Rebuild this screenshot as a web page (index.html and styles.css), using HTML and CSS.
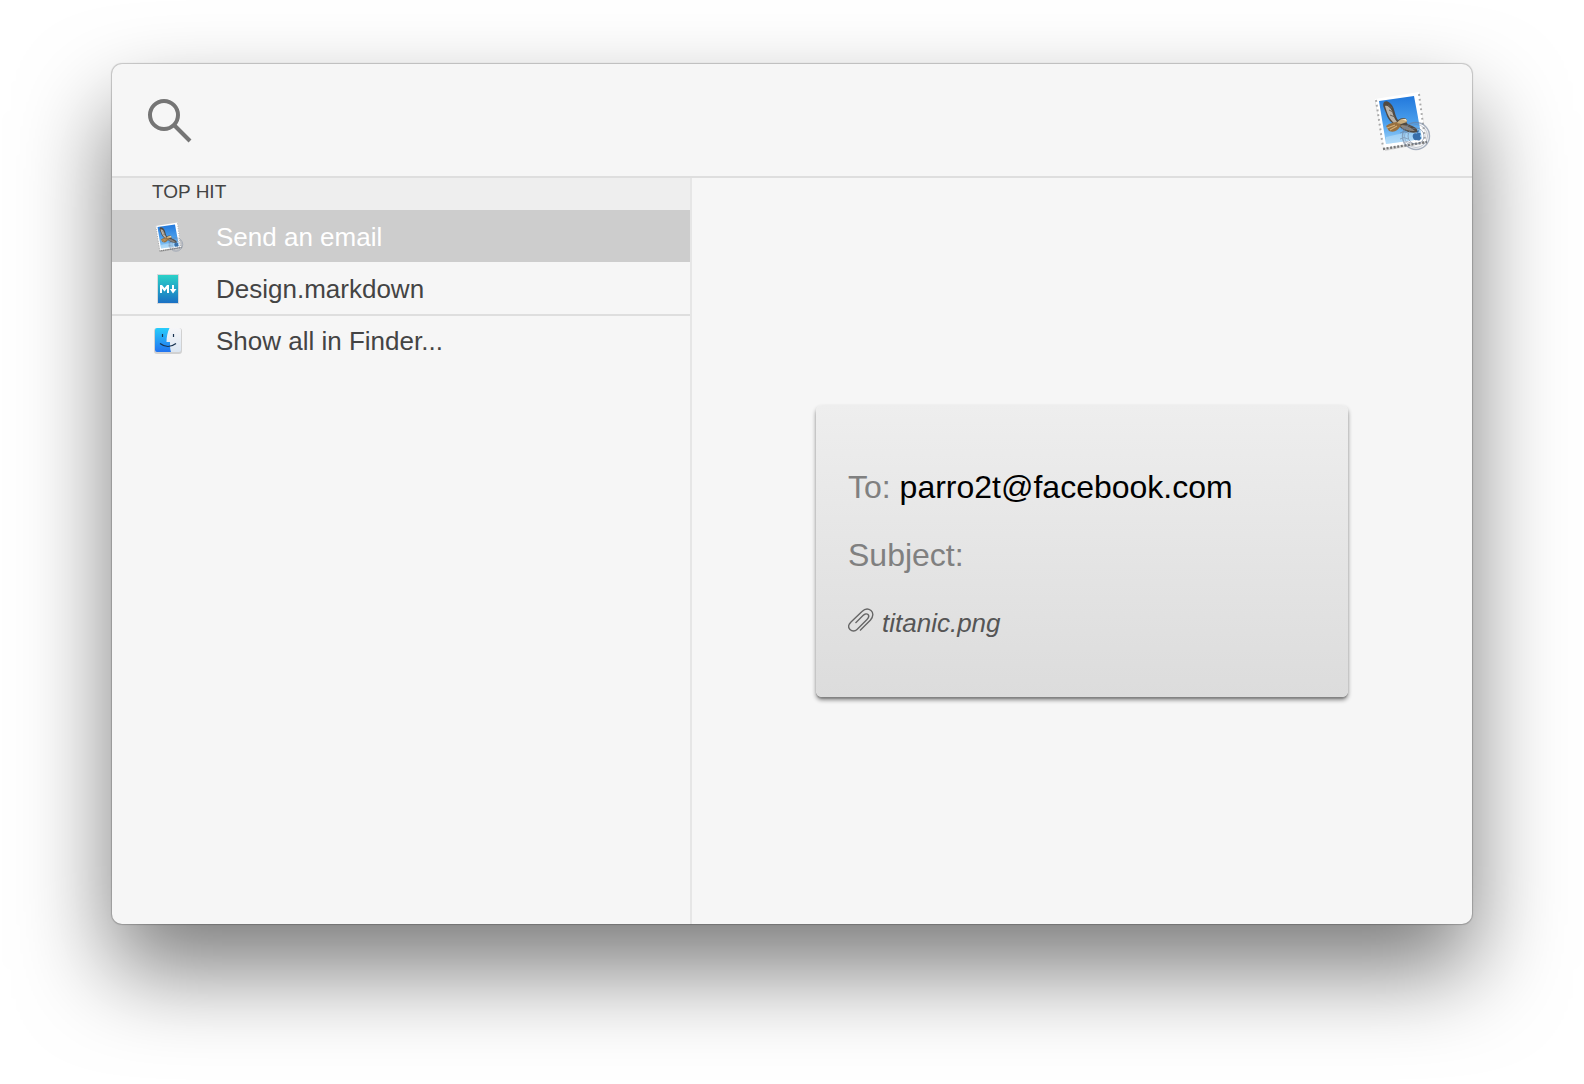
FILE: index.html
```html
<!DOCTYPE html>
<html lang="en">
<head>
<meta charset="utf-8">
<title>Search</title>
<link rel="stylesheet" href="styles.css">
</head>
<body>
<svg class="defs" aria-hidden="true">
  <defs>
    <linearGradient id="sky" x1="0" y1="0" x2="0" y2="1">
      <stop offset="0" stop-color="#2178dc"/><stop offset="0.55" stop-color="#4b9fec"/><stop offset="1" stop-color="#9dd2f8"/>
    </linearGradient>
    <linearGradient id="doc" x1="0" y1="0" x2="0" y2="1">
      <stop offset="0" stop-color="#2bd2c8"/><stop offset="1" stop-color="#1a70c4"/>
    </linearGradient>
    <linearGradient id="face" x1="0" y1="0" x2="0" y2="1">
      <stop offset="0" stop-color="#27cdfb"/><stop offset="1" stop-color="#2273f0"/>
    </linearGradient>
    <linearGradient id="pale" x1="0" y1="0" x2="0" y2="1">
      <stop offset="0" stop-color="#f6f6f8"/><stop offset="1" stop-color="#dbe6f2"/>
    </linearGradient>
    <symbol id="stamp" viewBox="0 0 60 64">
      <path d="M3 13 47 5 55 54 13 62Z" fill="#000" opacity=".12"/>
      <path d="M3 10 47 3 54 52 12 59Z" fill="#fff"/>
      <path d="M4 11 11 58M47 5 53 50" stroke="#a9a9a9" stroke-width="2" stroke-dasharray="1.8 3" fill="none"/>
      <path d="M11 60 55 53" stroke="#777" stroke-width="2.4" stroke-dasharray="2 1.6" fill="none"/>
      <path d="M7 12 42 7 50 50 14 55Z" fill="url(#sky)"/>
      <path d="M14 48 49 40 50 50 14 55Z" fill="#d6edfb" opacity=".4"/>
      <path d="M24 36C19 34 15 29 14 24 12 19 10 16 12 13 15 11 19 14 21 18 23 22 23 27 26 31 29 29 33 28 35 31 35 33 33 34 38 36 43 38 45 39 46 43 39 45 32 42 28 38Z" fill="#514a42"/>
      <path d="M13 17C15 16 18 18 20 22 21 26 22 29 25 33L23 35C17 30 15 24 13 17Z" fill="#b9b2a8"/>
      <path d="M30 36C35 36 39 39 43 42 37 42 32 41 28 37Z" fill="#8f877c"/>
      <path d="M16 16l4 3M17 21l4 2M18 26l5 2" stroke="#655e56" stroke-width="1"/>
      <path d="M14 37C18 34 22 33 26 33L29 36C26 42 22 44 17 42Z" fill="#98703f"/>
      <path d="M15 39l8-3M18 41l7-4" stroke="#d3ae77" stroke-width="1.2"/>
      <path d="M25 34C27 30 31 29 34 30L35 33 29 35Z" fill="#c9ad7d"/>
      <path d="M30 30.500 34 30 35 32Z" fill="#f5ead2"/>
      <g fill="none" stroke="#70809a" opacity=".6">
        <circle cx="44" cy="47" r="13.5" stroke-width="1.4"/><circle cx="44" cy="47" r="11.5" stroke-width=".7"/><circle cx="44" cy="47" r="8" stroke-width="1"/>
        <path d="M29 40q4-3 8 0M28 44q4-3 8 0M28 50q4-3 8 0M31 54q4-3 8 0" stroke-width="1"/>
      </g>
      <path d="M44.500 44.500c2-1 3.500-.8 4.500.5-1.500 1.500-1 3 .3 3.700-1.200 3-2.300 3.300-4.300 2.300-2.500 1-3.500-.5-4.300-3.200-.2-3 1.500-4.300 3.800-3.300ZM44.500 44q0-2.500 2.500-3 0 2.800-2.500 3Z" fill="#245d9c" opacity=".85"/>
    </symbol>
  </defs>
</svg>

<main class="window">
  <header class="search">
    <label class="search-label" for="query">
      <svg class="lens" viewBox="0 0 46 46" role="img" aria-label="Search">
        <circle cx="17" cy="17" r="14" fill="none" stroke="#757575" stroke-width="4"/>
        <path d="M27 27 43 43" stroke="#757575" stroke-width="4" fill="none"/>
      </svg>
    </label>
    <input class="query" id="query" type="text" autocomplete="off">
    <svg class="app-icon" aria-hidden="true"><use href="#stamp"/></svg>
  </header>

  <div class="body">
    <nav class="results" aria-label="Results">
      <h2 class="group">TOP HIT</h2>
      <button class="item selected" type="button">
        <svg class="item-icon" aria-hidden="true"><use href="#stamp"/></svg>
        <span>Send an email</span>
      </button>
      <button class="item" type="button">
        <svg class="item-icon" viewBox="0 0 30 32" aria-hidden="true">
          <path d="M3 1h22v30H3z" fill="#d6d9dc"/>
          <path d="M4 2h20v28H4z" fill="url(#doc)"/>
          <path d="M6 20v-8h2l2.500 3 2.500-3h2v8h-2v-4.500l-2.500 3-2.500-3V20ZM18 12h2v4h2.500L19 20.500 15.800 16H18Z" fill="#fff"/>
        </svg>
        <span>Design.markdown</span>
      </button>
      <button class="item separated" type="button">
        <svg class="item-icon" viewBox="0 0 30 32" aria-hidden="true">
          <rect x="0" y="3" width="28" height="26" rx="3" fill="#000" opacity=".15"/>
          <rect x="1" y="3" width="26" height="24" rx="2" fill="url(#pale)"/>
          <path d="M3 3h12.500C13.500 7 12.500 12 12.500 17H16c0 4 0 7 1 10H3q-2 0-2-2V5q0-2 2-2Z" fill="url(#face)"/>
          <path d="M8.500 9v3M19.500 9v3" stroke="#183350" stroke-width="1.200"/>
          <path d="M6 18.500q8 6 16 0" stroke="#183350" stroke-width="1.200" fill="none"/>
        </svg>
        <span>Show all in Finder...</span>
      </button>
    </nav>

    <section class="preview" aria-label="Preview">
      <article class="card">
        <p class="field"><span class="name">To:</span> parro2t@facebook.com</p>
        <p class="field"><span class="name">Subject:</span></p>
        <p class="attachment">
          <svg class="clip" viewBox="0 0 26 32" aria-hidden="true">
            <path d="M12 23.500 22.500 13C25.500 9.500 25.500 5.500 23 3.500S17 1.500 14 4.500L3 15C0 18 0 20.500 2 22.500s5 2 7 0L19 12.500C21 10.500 21 8.500 20 7.500S17 6.500 15 8.500L7.500 16" fill="none" stroke="#666" stroke-width="1.400"/>
          </svg>
          <span>titanic.png</span>
        </p>
      </article>
    </section>
  </div>
</main>
</body>
</html>
```
FILE: styles.css
```css
* {
  box-sizing: border-box;
}

body {
  margin: 0;
  min-height: 100vh;
  padding: 64px 112px 160px;
  display: flex;
  background: #fff;
  color: #444;
  font-family: "Liberation Sans", Arial, sans-serif;
}

.defs {
  position: absolute;
  width: 0;
  height: 0;
}

.window {
  flex: 1;
  display: flex;
  flex-direction: column;
  overflow: hidden;
  border-radius: 10px;
  background: #f6f6f6;
  box-shadow: 0 0 1px 1px rgba(0, 0, 0, 0.2), 0 46px 92px rgba(0, 0, 0, 0.52);
}

.search {
  display: flex;
  align-items: center;
  height: 114px;
  padding: 2px 40px 0 35px;
  gap: 24px;
  border-bottom: 2px solid #dedede;
}

.search-label,
.lens,
.app-icon,
.item-icon,
.clip {
  display: block;
  flex: none;
}

.lens {
  width: 46px;
  height: 46px;
}

.query {
  flex: 1;
  min-width: 0;
  height: 64px;
  padding: 0;
  border: 0;
  outline: 0;
  background: transparent;
  color: inherit;
  font: inherit;
  font-size: 40px;
}

.app-icon {
  width: 60px;
  height: 64px;
}

.body {
  flex: 1;
  display: flex;
}

.results {
  width: 580px;
  border-right: 2px solid #e6e6e6;
}

.group {
  margin: 0;
  height: 32px;
  padding-left: 40px;
  background: #eee;
  font-size: 19px;
  font-weight: 400;
  line-height: 28px;
}

.item {
  display: flex;
  align-items: center;
  gap: 32px;
  width: 100%;
  height: 52px;
  padding: 2px 42px 0;
  border: 0;
  background: transparent;
  color: #444;
  font: inherit;
  font-size: 26px;
  text-align: left;
}

.selected {
  background: #cdcdcd;
  color: #fff;
}

.separated {
  padding-top: 0;
  border-top: 2px solid #dedede;
}

.item-icon {
  width: 30px;
  height: 32px;
}

.preview {
  flex: 1;
  display: flex;
  align-items: center;
  justify-content: center;
  padding: 32px;
}

.card {
  width: 532px;
  padding: 48px 32px 40px;
  border-radius: 6px;
  background: linear-gradient(#eee, #dcdcdc);
  box-shadow: 0 3px 4px rgba(0, 0, 0, 0.45), 0 2px 1px rgba(0, 0, 0, 0.12);
}

.field,
.attachment {
  margin: 0;
  height: 68px;
  line-height: 68px;
}

.field {
  color: #000;
  font-size: 32px;
}

.name {
  color: #808080;
}

.attachment {
  display: flex;
  align-items: center;
  gap: 8px;
  color: #555;
  font-size: 26px;
  font-style: italic;
}

.clip {
  width: 26px;
  height: 32px;
}
```
